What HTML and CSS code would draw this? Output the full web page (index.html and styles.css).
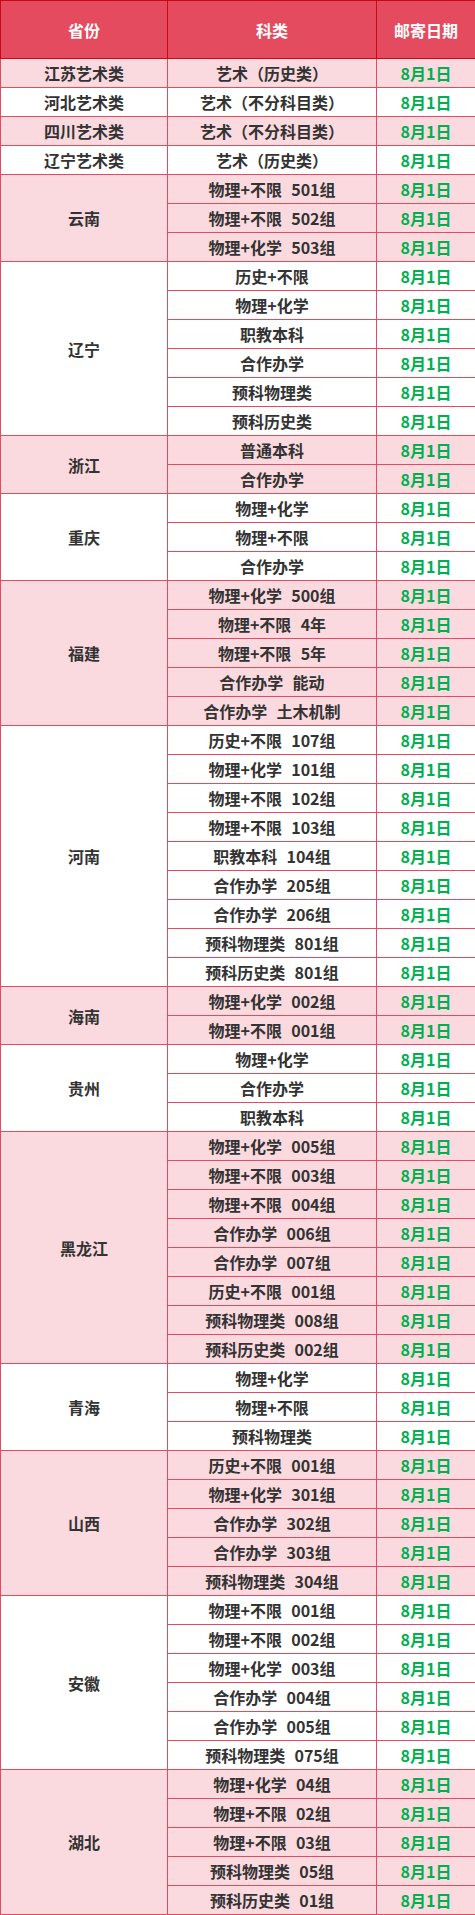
FILE: index.html
```html
<!DOCTYPE html>
<html lang="zh">
<head>
<meta charset="utf-8">
<link rel="stylesheet" href="styles.css">
</head>
<body>
<table class="sched">
<colgroup><col class="c1"><col class="c2"><col class="c3"></colgroup>
<thead>
<tr><th>省份</th><th>科类</th><th>邮寄日期</th></tr>
</thead>
<tbody class="p"><tr><td>江苏艺术类</td><td>艺术（历史类）</td><td class="d">8月1日</td></tr></tbody>
<tbody><tr><td>河北艺术类</td><td>艺术（不分科目类）</td><td class="d">8月1日</td></tr></tbody>
<tbody class="p"><tr><td>四川艺术类</td><td>艺术（不分科目类）</td><td class="d">8月1日</td></tr></tbody>
<tbody><tr><td>辽宁艺术类</td><td>艺术（历史类）</td><td class="d">8月1日</td></tr></tbody>
<tbody class="p">
<tr><td rowspan="3">云南</td><td>物理+不限  501组</td><td class="d">8月1日</td></tr>
<tr><td>物理+不限  502组</td><td class="d">8月1日</td></tr>
<tr><td>物理+化学  503组</td><td class="d">8月1日</td></tr>
</tbody>
<tbody>
<tr><td rowspan="6">辽宁</td><td>历史+不限</td><td class="d">8月1日</td></tr>
<tr><td>物理+化学</td><td class="d">8月1日</td></tr>
<tr><td>职教本科</td><td class="d">8月1日</td></tr>
<tr><td>合作办学</td><td class="d">8月1日</td></tr>
<tr><td>预科物理类</td><td class="d">8月1日</td></tr>
<tr><td>预科历史类</td><td class="d">8月1日</td></tr>
</tbody>
<tbody class="p">
<tr><td rowspan="2">浙江</td><td>普通本科</td><td class="d">8月1日</td></tr>
<tr><td>合作办学</td><td class="d">8月1日</td></tr>
</tbody>
<tbody>
<tr><td rowspan="3">重庆</td><td>物理+化学</td><td class="d">8月1日</td></tr>
<tr><td>物理+不限</td><td class="d">8月1日</td></tr>
<tr><td>合作办学</td><td class="d">8月1日</td></tr>
</tbody>
<tbody class="p">
<tr><td rowspan="5">福建</td><td>物理+化学  500组</td><td class="d">8月1日</td></tr>
<tr><td>物理+不限  4年</td><td class="d">8月1日</td></tr>
<tr><td>物理+不限  5年</td><td class="d">8月1日</td></tr>
<tr><td>合作办学  能动</td><td class="d">8月1日</td></tr>
<tr><td>合作办学  土木机制</td><td class="d">8月1日</td></tr>
</tbody>
<tbody>
<tr><td rowspan="9">河南</td><td>历史+不限  107组</td><td class="d">8月1日</td></tr>
<tr><td>物理+化学  101组</td><td class="d">8月1日</td></tr>
<tr><td>物理+不限  102组</td><td class="d">8月1日</td></tr>
<tr><td>物理+不限  103组</td><td class="d">8月1日</td></tr>
<tr><td>职教本科  104组</td><td class="d">8月1日</td></tr>
<tr><td>合作办学  205组</td><td class="d">8月1日</td></tr>
<tr><td>合作办学  206组</td><td class="d">8月1日</td></tr>
<tr><td>预科物理类  801组</td><td class="d">8月1日</td></tr>
<tr><td>预科历史类  801组</td><td class="d">8月1日</td></tr>
</tbody>
<tbody class="p">
<tr><td rowspan="2">海南</td><td>物理+化学  002组</td><td class="d">8月1日</td></tr>
<tr><td>物理+不限  001组</td><td class="d">8月1日</td></tr>
</tbody>
<tbody>
<tr><td rowspan="3">贵州</td><td>物理+化学</td><td class="d">8月1日</td></tr>
<tr><td>合作办学</td><td class="d">8月1日</td></tr>
<tr><td>职教本科</td><td class="d">8月1日</td></tr>
</tbody>
<tbody class="p">
<tr><td rowspan="8">黑龙江</td><td>物理+化学  005组</td><td class="d">8月1日</td></tr>
<tr><td>物理+不限  003组</td><td class="d">8月1日</td></tr>
<tr><td>物理+不限  004组</td><td class="d">8月1日</td></tr>
<tr><td>合作办学  006组</td><td class="d">8月1日</td></tr>
<tr><td>合作办学  007组</td><td class="d">8月1日</td></tr>
<tr><td>历史+不限  001组</td><td class="d">8月1日</td></tr>
<tr><td>预科物理类  008组</td><td class="d">8月1日</td></tr>
<tr><td>预科历史类  002组</td><td class="d">8月1日</td></tr>
</tbody>
<tbody>
<tr><td rowspan="3">青海</td><td>物理+化学</td><td class="d">8月1日</td></tr>
<tr><td>物理+不限</td><td class="d">8月1日</td></tr>
<tr><td>预科物理类</td><td class="d">8月1日</td></tr>
</tbody>
<tbody class="p">
<tr><td rowspan="5">山西</td><td>历史+不限  001组</td><td class="d">8月1日</td></tr>
<tr><td>物理+化学  301组</td><td class="d">8月1日</td></tr>
<tr><td>合作办学  302组</td><td class="d">8月1日</td></tr>
<tr><td>合作办学  303组</td><td class="d">8月1日</td></tr>
<tr><td>预科物理类  304组</td><td class="d">8月1日</td></tr>
</tbody>
<tbody>
<tr><td rowspan="6">安徽</td><td>物理+不限  001组</td><td class="d">8月1日</td></tr>
<tr><td>物理+不限  002组</td><td class="d">8月1日</td></tr>
<tr><td>物理+化学  003组</td><td class="d">8月1日</td></tr>
<tr><td>合作办学  004组</td><td class="d">8月1日</td></tr>
<tr><td>合作办学  005组</td><td class="d">8月1日</td></tr>
<tr><td>预科物理类  075组</td><td class="d">8月1日</td></tr>
</tbody>
<tbody class="p">
<tr><td rowspan="5">湖北</td><td>物理+化学  04组</td><td class="d">8月1日</td></tr>
<tr><td>物理+不限  02组</td><td class="d">8月1日</td></tr>
<tr><td>物理+不限  03组</td><td class="d">8月1日</td></tr>
<tr><td>预科物理类  05组</td><td class="d">8月1日</td></tr>
<tr><td>预科历史类  01组</td><td class="d">8月1日</td></tr>
</tbody>
</table>
</body>
</html>
```
FILE: styles.css
```css
html, body {
  margin: 0;
  padding: 0;
  background: #ffffff;
}
.sched {
  width: 475px;
  border-collapse: collapse;
  table-layout: fixed;
  font-family: "Noto Sans CJK SC", "Liberation Sans", sans-serif;
  font-size: 16px;
  font-weight: 700;
  color: #333333;
}
.c1 { width: 167px; }
.c2 { width: 209px; }
.c3 { width: 99px; }
.sched th {
  height: 57px;
  padding: 0;
  background: #e54b5e;
  color: #ffffff;
  font-weight: 700;
  border: 1px solid #c80a14;
  text-align: center;
  vertical-align: middle;
}
.sched td {
  height: 28px;
  padding: 0;
  border: 1px solid #e54b5e;
  text-align: center;
  vertical-align: middle;
  white-space: pre;
  word-spacing: 1px;
  line-height: 20px;
}
.sched tbody.p td {
  background: #fadadf;
}
.sched td.d {
  color: #00b050;
}
```
